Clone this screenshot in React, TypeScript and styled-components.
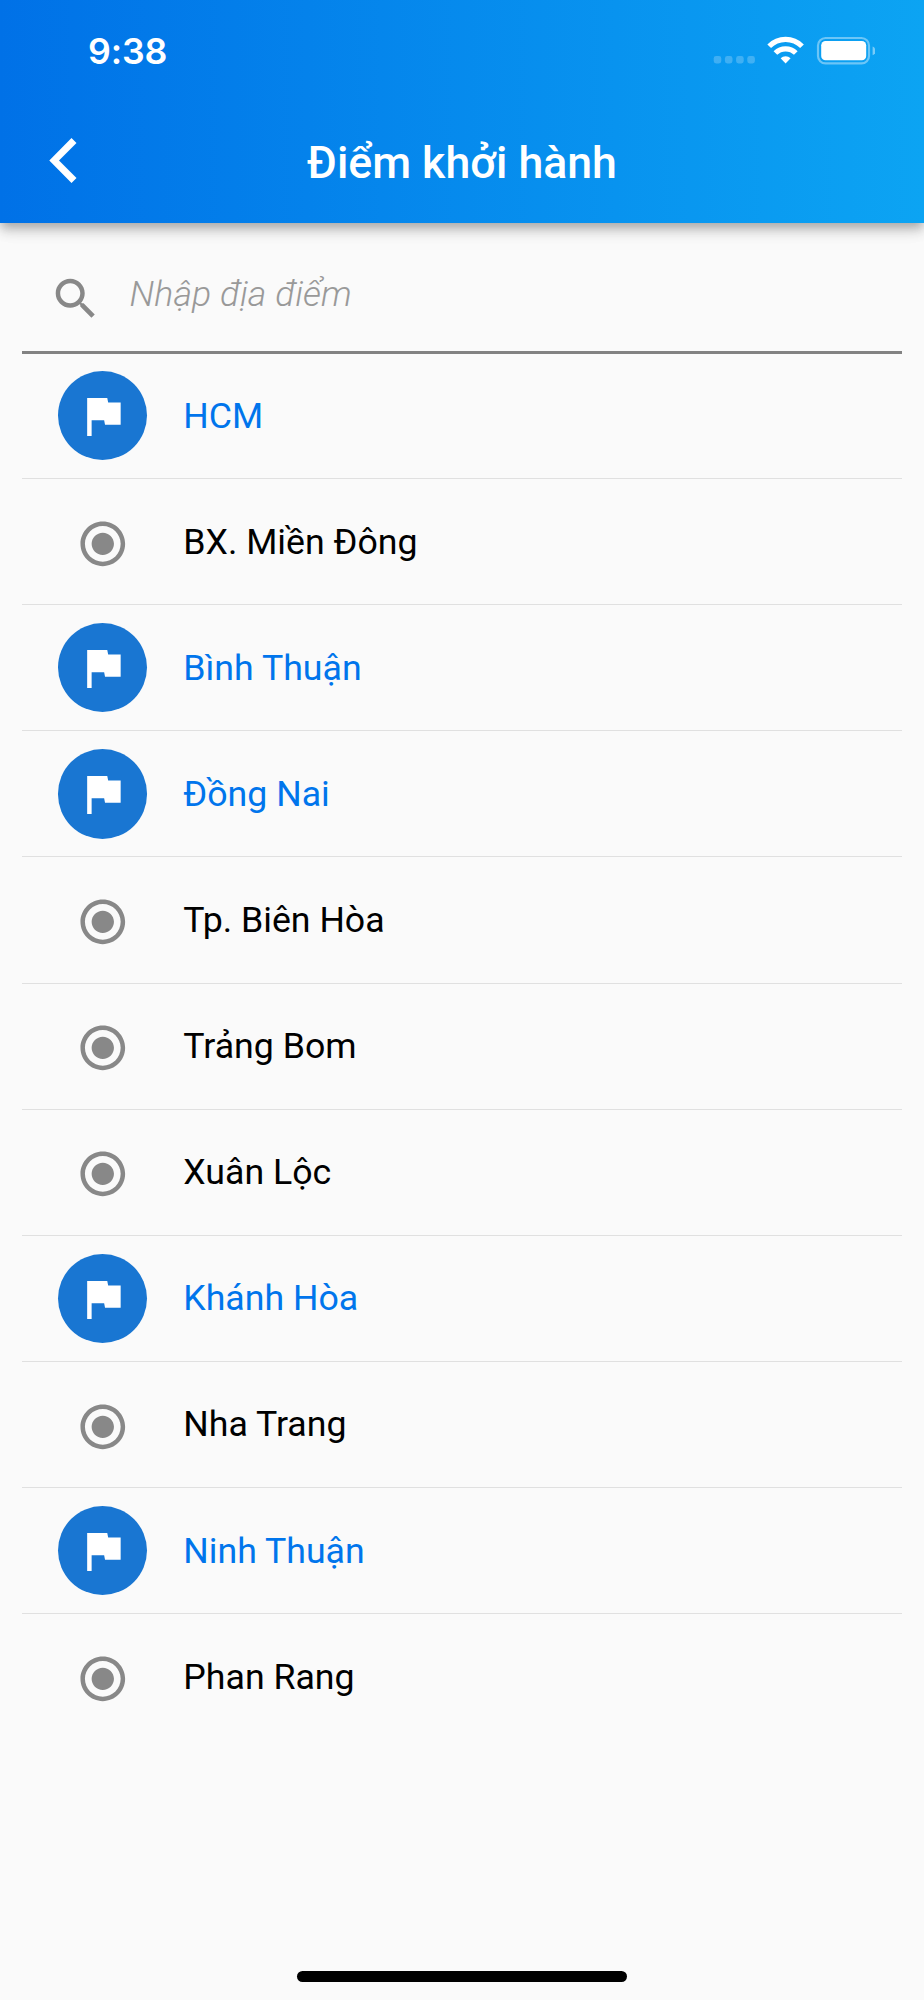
import React from "react";
import styled, { createGlobalStyle } from "styled-components";

const GlobalStyle = createGlobalStyle`
  * { box-sizing: border-box; }
  body { margin: 0; background: #fafafa; }
`;

const Screen = styled.div`
  width: 924px;
  height: 2000px;
  display: flex;
  flex-direction: column;
  overflow: hidden;
  background: #fafafa;
  font-family: Roboto, sans-serif;
`;

const Header = styled.header`
  flex: none;
  height: 223px;
  background: linear-gradient(90deg, #0071e7 0%, #0ca4f3 100%);
  box-shadow: 0 4.5px 9px -2px rgba(0, 0, 0, 0.2), 0 9px 11px rgba(0, 0, 0, 0.14),
    0 2px 22px rgba(0, 0, 0, 0.08);
  color: #fff;
`;

const StatusBar = styled.div`
  height: 98px;
  padding: 29px 49px 0 88px;
  display: flex;
  justify-content: space-between;
  align-items: flex-start;
`;

const Clock = styled.div`
  font: 580 35.7px/44px Inter, sans-serif;
  letter-spacing: -0.1px;
`;

const StatusIcons = styled.svg`
  display: block;
  width: 166px;
  height: 40px;
`;

const TitleBar = styled.div`
  height: 125px;
  display: grid;
  grid-template-columns: 120px 1fr 120px;
  align-items: center;
`;

const BackButton = styled.button`
  border: 0;
  padding: 0 0 0 49px;
  background: none;
  color: #fff;
  display: flex;
`;

const BackIcon = styled.svg`
  display: block;
  width: 28px;
  height: 45px;
  fill: currentColor;
`;

const Title = styled.h1`
  margin: 0;
  padding-top: 5px;
  font-size: 44.64px;
  font-weight: 500;
  line-height: 60px;
  text-align: center;
  white-space: nowrap;
`;

const Icon = styled.svg`
  display: block;
  flex: none;
  width: 53.6px;
  height: 53.6px;
  fill: currentColor;
`;

const Content = styled.main`
  flex: 1;
  padding: 0 22px;
`;

const SearchField = styled.label`
  height: 131px;
  padding: 24px 0 0 27.4px;
  display: flex;
  align-items: center;
  gap: 26.6px;
  border-bottom: 3px solid #828282;
  color: #888;
`;

const SearchInput = styled.input`
  flex: 1;
  height: 60px;
  margin-bottom: 10px;
  padding: 0;
  border: 0;
  outline: 0;
  background: none;
  font: italic 300 35.7px Roboto, sans-serif;
  letter-spacing: 0.1px;
  &::placeholder {
    color: #999;
    opacity: 1;
  }
`;

const List = styled.ul`
  margin: -1px 0 0;
  padding: 0;
  list-style: none;
`;

const Row = styled.li<{ $region?: boolean }>`
  height: 126.12px;
  padding-left: 36px;
  display: flex;
  align-items: center;
  gap: 36px;
  border-bottom: 1px solid #e0e0e0;
  font-size: 35.7px;
  line-height: 50px;
  color: ${(p) => (p.$region ? "#0075ec" : "#000")};
  &:last-child {
    border-bottom: 0;
  }
`;

const Marker = styled.span<{ $region?: boolean }>`
  width: 89.3px;
  height: 89.3px;
  border-radius: 50%;
  display: flex;
  align-items: center;
  justify-content: center;
  padding-top: ${(p) => (p.$region ? 0 : 4)}px;
  background: ${(p) => (p.$region ? "#1976d2" : "transparent")};
  color: ${(p) => (p.$region ? "#fff" : "#888")};
`;

const HomeArea = styled.footer`
  height: 29px;
  display: flex;
  justify-content: center;
  align-items: flex-start;
`;

const HomeIndicator = styled.div`
  width: 330px;
  height: 11px;
  border-radius: 6px;
  background: #000;
`;

const PLACES = [
  { name: "HCM", region: true },
  { name: "BX. Miền Đông" },
  { name: "Bình Thuận", region: true },
  { name: "Đồng Nai", region: true },
  { name: "Tp. Biên Hòa" },
  { name: "Trảng Bom" },
  { name: "Xuân Lộc" },
  { name: "Khánh Hòa", region: true },
  { name: "Nha Trang" },
  { name: "Ninh Thuận", region: true },
  { name: "Phan Rang" },
];

const FLAG = "M14.4 6L14 4H5v17h2v-7h5.6l.4 2h7V6z";
const RADIO =
  "M12 7c-2.76 0-5 2.24-5 5s2.24 5 5 5 5-2.24 5-5-2.24-5-5-5zm0-5C6.48 2 2 6.48 2 12s4.48 10 10 10 10-4.48 10-10S17.52 2 12 2zm0 18c-4.42 0-8-3.58-8-8s3.58-8 8-8 8 3.58 8 8-3.58 8-8 8z";
const SEARCH =
  "M15.5 14h-.79l-.28-.27C15.41 12.59 16 11.11 16 9.5 16 5.91 13.09 3 9.5 3S3 5.91 3 9.5 5.91 16 9.5 16c1.61 0 3.09-.59 4.23-1.57l.27.28v.79l5 4.99L20.49 19l-4.99-5zm-6 0C7.01 14 5 11.99 5 9.5S7.01 5 9.5 5 14 7.01 14 9.5 11.99 14 9.5 14z";
const BACK = "M22.5 0L27.5 5 10 22.5 27.5 40 22.5 45 0.3 22.5z";

export default function App() {
  return (
    <>
      <GlobalStyle />
      <Screen>
        <Header>
          <StatusBar>
            <Clock>9:38</Clock>
            <StatusIcons viewBox="0 0 166 40" fill="#fff">
              <g opacity="0.22">
                {[4.7, 15.9, 27.1, 38.3].map((x) => (
                  <rect key={x} x={x} y="27" width="7.6" height="7.4" rx="2.4" />
                ))}
              </g>
              <g fill="none" stroke="#fff">
                <path d="M60.2 17.2a23 23 0 0 1 32.8 0" strokeWidth="5.2" />
                <path d="M66.4 24a14.5 14.5 0 0 1 20.4 0" strokeWidth="5.2" />
              </g>
              <path d="M76.6 34.4l-5-5.1a7.4 7.4 0 0 1 10 0z" />
              <rect x="109" y="9" width="51" height="25.4" rx="7.5" fill="none" stroke="#fff" strokeOpacity="0.4" strokeWidth="2.2" />
              <rect x="112.2" y="12" width="45" height="19.2" rx="4.3" />
              <path d="M163.6 17.5c4 1.6 4 7.2 0 8.8z" opacity="0.45" />
            </StatusIcons>
          </StatusBar>
          <TitleBar>
            <BackButton aria-label="Quay lại">
              <BackIcon viewBox="0 0 28 45">
                <path d={BACK} />
              </BackIcon>
            </BackButton>
            <Title>Điểm khởi hành</Title>
          </TitleBar>
        </Header>
        <Content>
          <SearchField>
            <Icon viewBox="0 0 24 24">
              <path d={SEARCH} />
            </Icon>
            <SearchInput placeholder="Nhập địa điểm" />
          </SearchField>
          <List>
            {PLACES.map(({ name, region }) => (
              <Row key={name} $region={region}>
                <Marker $region={region}>
                  <Icon viewBox="0 0 24 24">
                    <path d={region ? FLAG : RADIO} />
                  </Icon>
                </Marker>
                {name}
              </Row>
            ))}
          </List>
        </Content>
        <HomeArea>
          <HomeIndicator />
        </HomeArea>
      </Screen>
    </>
  );
}
